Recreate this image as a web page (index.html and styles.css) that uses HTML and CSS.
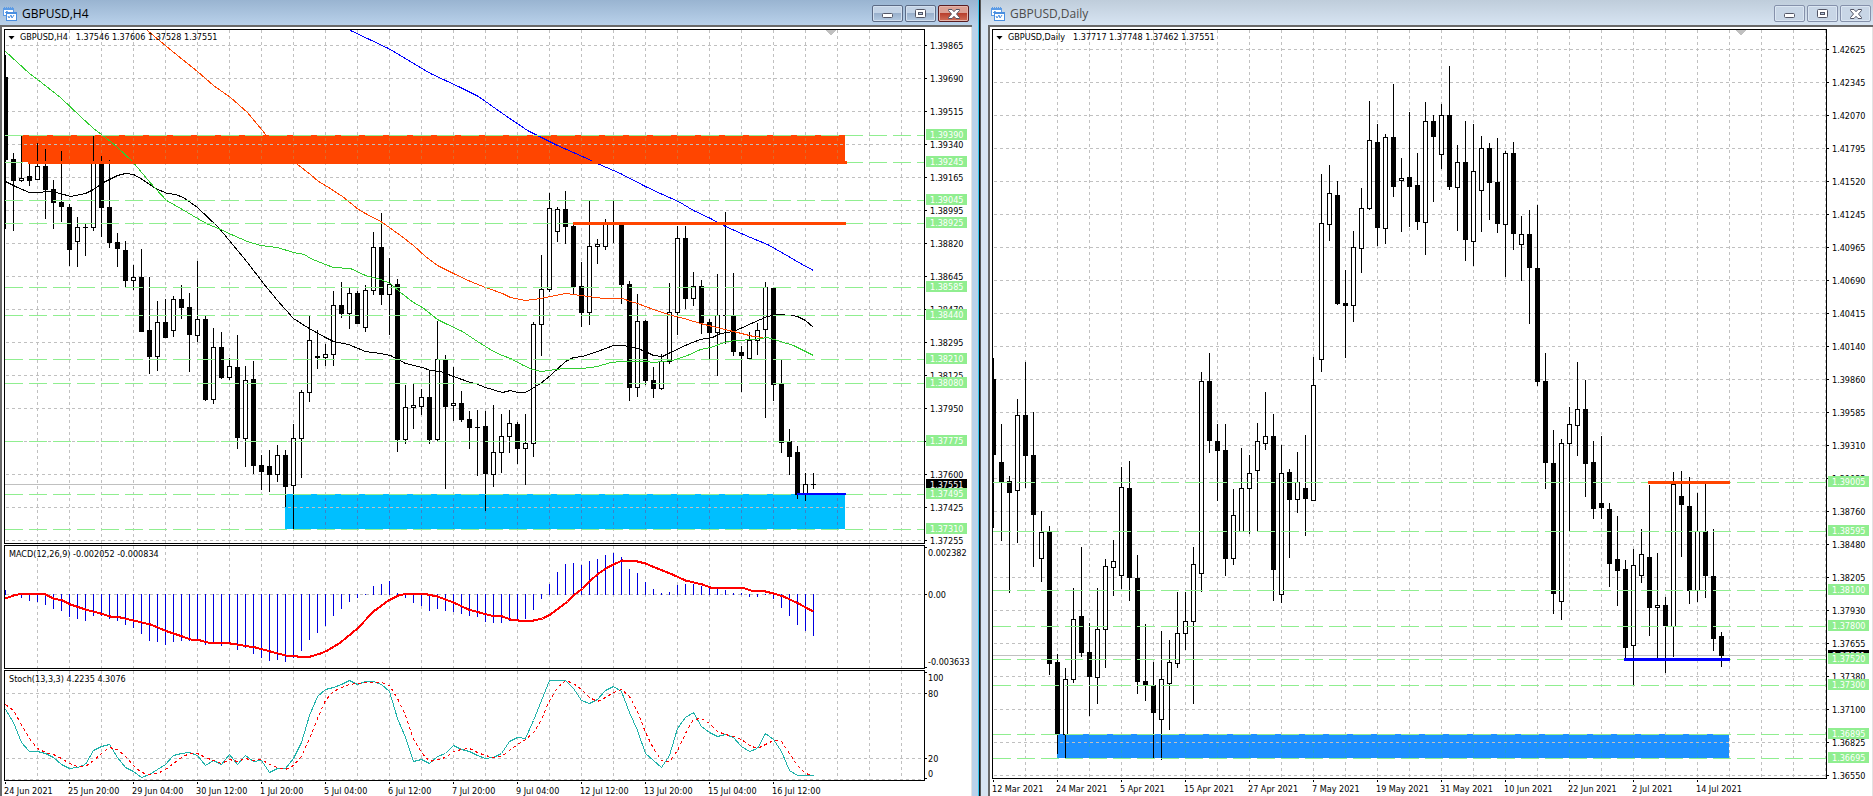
FILE: index.html
```
<!DOCTYPE html>
<html lang="en">
<head>
    <meta charset="utf-8">
    <title>GBPUSD</title>
    <link rel="stylesheet" href="styles.css">
</head>
<body>
    <svg class="defs" width="0" height="0" aria-hidden="true">
        <symbol id="icon-chart" viewBox="0 0 14 14">
            <rect x="0.5" y="1.5" width="10" height="7" fill="#fff" stroke="#5b9be6"/>
            <path d="M1 2.5h9M1.5 0v2M3.5 0v2M5.5 0v2M7.5 0v2M9.5 0v2M2 6l2-2 1 2" fill="none" stroke="#5b9be6"/>
            <rect x="3.5" y="5.5" width="10" height="8" fill="#fff" stroke="#4a8fe0"/>
            <path d="M4 6.5h9M5 9l1 2 2-3 1 3 2-3" fill="none" stroke="#4a8fe0"/>
        </symbol>
        <symbol id="icon-min" viewBox="0 0 11 5">
            <rect x="0.5" y="0.5" width="10" height="4" rx="1" fill="#fff" stroke="#535666"/>
        </symbol>
        <symbol id="icon-max" viewBox="0 0 11 9">
            <rect x="0.5" y="0.5" width="10" height="8" rx="1" fill="#fff" stroke="#535666"/>
            <rect x="3.5" y="3.5" width="4" height="2" fill="#b4c6dc" stroke="#535666"/>
        </symbol>
        <symbol id="icon-close" viewBox="0 0 12 10">
            <path d="M0.5 0.5h3.5l2 2.2 2-2.2h3.5v1l-3 3.5 3 3.5v1h-3.5l-2-2.2-2 2.2h-3.5v-1l3-3.5-3-3.5z" fill="#fff" stroke="#535666"/>
        </symbol>
    </svg>

    <main class="desktop">
        <section class="window active">
            <header class="title-bar">
                <svg class="icon" width="14" height="14"><use href="#icon-chart"/></svg>
                <h2>GBPUSD,H4</h2>
                <button class="win-btn min" aria-label="Minimize"><svg width="11" height="5"><use href="#icon-min"/></svg></button>
                <button class="win-btn" aria-label="Restore"><svg width="11" height="9"><use href="#icon-max"/></svg></button>
                <button class="win-btn close" aria-label="Close"><svg width="12" height="10"><use href="#icon-close"/></svg></button>
            </header>
            <div class="client h4">
                <div class="pane">
                    <svg class="plot" id="h4-price"></svg>
                    <div class="caption"><button class="drop" aria-label="Trade panel"></button><span class="symbol">GBPUSD,H4</span>1.37546 1.37606 1.37528 1.37551</div>
                </div>
                <svg class="axis" id="h4-price-axis"></svg>
                <div class="pane">
                    <svg class="plot" id="h4-macd"></svg>
                    <div class="caption sub">MACD(12,26,9) -0.002052 -0.000834</div>
                </div>
                <svg class="axis" id="h4-macd-axis"></svg>
                <div class="pane">
                    <svg class="plot" id="h4-stoch"></svg>
                    <div class="caption sub">Stoch(13,3,3) 4.2235 4.3076</div>
                </div>
                <svg class="axis" id="h4-stoch-axis"></svg>
                <svg class="dates" id="h4-dates"></svg>
            </div>
        </section>

        <section class="window">
            <header class="title-bar">
                <svg class="icon" width="14" height="14"><use href="#icon-chart"/></svg>
                <h2>GBPUSD,Daily</h2>
                <button class="win-btn min" aria-label="Minimize"><svg width="11" height="5"><use href="#icon-min"/></svg></button>
                <button class="win-btn" aria-label="Restore"><svg width="11" height="9"><use href="#icon-max"/></svg></button>
                <button class="win-btn close" aria-label="Close"><svg width="12" height="10"><use href="#icon-close"/></svg></button>
            </header>
            <div class="client daily">
                <div class="pane">
                    <svg class="plot" id="d1-price"></svg>
                    <div class="caption"><button class="drop" aria-label="Trade panel"></button><span class="symbol">GBPUSD,Daily</span>1.37717 1.37748 1.37462 1.37551</div>
                </div>
                <svg class="axis" id="d1-price-axis"></svg>
                <svg class="dates" id="d1-dates"></svg>
            </div>
        </section>
    </main>
    <script src="chart.js"></script>
</body>
</html>
```
FILE: styles.css
```
* {
    box-sizing: border-box;
}
body {
    margin: 0;
    background: #14141c;
    font-family: "DejaVu Sans Condensed", "DejaVu Sans", sans-serif;
    font-size: 9px;
    color: #000;
}
.defs {
    position: absolute;
}
.desktop {
    display: grid;
    grid-template-columns: 979fr 893fr;
    gap: 1px;
    height: 100vh;
    min-height: 500px;
}

/* windows */
.window {
    display: flex;
    flex-direction: column;
    min-width: 0;
    background: #d7e4f2;
    border-left: 1px solid #555;
}
.window.active {
    background: #b9d1ea;
    border-left: none;
    border-right: 1px solid #35c8ee;
}
.title-bar {
    display: flex;
    align-items: center;
    gap: 2px;
    height: 25px;
    padding: 2px 2px 0 10px;
    background: linear-gradient(#bfcddb, #d7e4f2);
}
.active .title-bar {
    padding: 2px 9px 0 3px;
    background: linear-gradient(#99b4d1, #b9d1ea);
}
.title-bar h2 {
    flex: 1;
    margin: 0 0 0 3px;
    font: 12px "Open Sans", "Noto Sans", sans-serif;
    color: #4c4c4c;
}
.active .title-bar h2 {
    color: #000;
}
.win-btn {
    display: flex;
    align-items: center;
    justify-content: center;
    width: 31px;
    height: 17px;
    padding: 0;
    border: 1px solid #8591ab;
    border-radius: 2px;
    background: #c8d6e6;
    box-shadow: inset 0 0 0 1px #dbe6f2;
}
.win-btn.min {
    padding-top: 4px;
}
.active .win-btn {
    border-color: #5c6b86;
    background: linear-gradient(#c3d3e6 50%, #99b0cc 50%, #b4cae2);
    box-shadow: inset 0 0 0 1px #d3e0ef;
}
.active .win-btn.close {
    border-color: #5a1d22;
    background: linear-gradient(#dba094 50%, #b9402e 50%, #d0705a);
    box-shadow: inset 0 0 0 1px #e6b5ab;
}

/* chart area */
.client {
    flex: 1;
    display: grid;
    grid-template-columns: minmax(0, 1fr) 45px;
    row-gap: 1px;
    min-height: 0;
    padding: 2px 1px 0 2px;
    background: #fff;
    border: solid #696969;
    border-width: 2px 0 0 2px;
    box-shadow: inset -1px 0 #e3e3e3;
}
.client.h4 {
    grid-template-rows: minmax(0, 1fr) 124px 111px 14px;
    margin-right: 6px;
    padding-right: 2px;
}
.client.daily {
    grid-template-rows: minmax(0, 1fr) 16px;
    margin-left: 7px;
}
.pane {
    position: relative;
    min-width: 0;
    border: 1px solid #000;
}
.plot,
.axis,
.dates {
    display: block;
    width: 100%;
    height: 100%;
}
.dates {
    grid-column: 1 / 3;
}
.caption {
    position: absolute;
    top: 0;
    left: 3px;
    display: flex;
    align-items: center;
    line-height: 15px;
}
.caption.sub {
    top: 1px;
    left: 4px;
}
.symbol {
    margin-right: 8px;
}
.drop {
    width: 7px;
    height: 4px;
    margin-right: 5px;
    padding: 0;
    border: none;
    background: #000;
    clip-path: polygon(0 0, 100% 0, 50% 100%);
}

/* chart drawing */
.grid {
    fill: none;
    stroke: #c0c0c0;
    stroke-dasharray: 3 3;
}
.level {
    fill: none;
    stroke: #90ee90;
    stroke-dasharray: 18 6;
}
.line {
    fill: none;
}
.signal {
    fill: none;
    stroke: #f00;
    stroke-dasharray: 3 3;
}
.level-text {
    fill: #fff;
}
```
FILE: chart.js
```
var STEP = 8;

// candles: high, body top, body bottom, low, 1 = bear / 0 = bull
var h4 = `55 77 160 229 1|153 159 181 231 1|136 178 181 182 0|163 176 181 186 1|143 166 180 180 0|149 166 190 219 1
180 189 203 229 1|151 202 207 222 1|204 207 250 266 1|217 227 242 267 0|224 227 228 256 1|136 162 228 231 0
156 163 208 237 1|160 207 243 248 1|233 242 249 267 1|241 250 281 287 1|265 277 281 290 0|249 277 332 332 1
277 330 357 374 1|301 322 357 371 0|299 322 338 338 1|296 299 331 337 0|285 299 308 319 1|293 307 335 372 1
261 319 336 342 0|316 319 400 401 1|328 347 400 404 0|332 347 378 379 1|358 366 378 380 0|335 367 438 449 1
366 380 439 467 0|361 379 466 474 1|455 465 472 490 1|450 466 475 492 1|445 455 475 482 0|450 455 487 507 1
424 438 486 529 0|390 392 439 478 0|316 340 393 402 0|330 356 358 369 1|344 354 358 366 0|291 305 355 366 0
282 305 314 318 1|288 293 314 329 0|291 293 324 324 1|285 290 328 332 0|232 247 291 295 0|213 247 295 305 1
258 284 295 335 0|279 284 440 452 1|385 407 440 444 0|384 405 408 429 0|389 397 407 415 0|370 397 440 444 1
321 359 440 441 0|355 360 407 489 1|367 403 406 421 0|391 403 420 422 1|411 419 428 449 1|410 427 428 476 1
411 426 474 511 1|405 452 475 487 0|414 436 453 473 0|410 423 437 453 0|422 424 449 464 1|414 443 449 485 0
322 324 444 457 0|255 289 325 356 0|193 208 290 292 0|207 209 232 242 0|191 209 227 244 1|225 226 287 294 1
262 286 313 327 1|201 246 313 325 0|239 244 247 264 0|219 224 247 250 0|201 223 224 243 1|224 225 285 304 1
281 284 388 401 1|294 321 388 397 0|320 321 381 385 1|367 380 389 398 1|354 361 389 390 0|283 312 362 364 0
226 238 313 335 0|226 238 299 309 1|272 286 299 306 0|280 286 323 334 1|319 322 333 359 1|274 315 333 376 0
212 315 316 344 1|273 315 352 356 1|346 352 356 392 1|332 340 359 359 0|323 330 341 355 0|282 287 330 418 0
288 288 385 401 1|360 384 443 453 1|429 441 457 475 1|446 452 495 499 1|473 484 494 501 0|473 484 485 489 1`;

var d1 = `358 379 455 528 1|424 462 482 541 1|476 481 493 593 1|399 415 491 543 0|362 415 456 488 1|412 455 515 567 1
511 532 559 582 0|526 531 664 675 1|654 662 734 754 1|668 679 735 758 0|588 619 680 683 0|547 616 653 657 1
623 652 677 716 1|588 629 678 704 0|559 566 630 668 0|540 561 568 596 0|467 487 576 589 0|461 488 578 601 1
555 578 682 694 1|624 681 685 701 1|662 685 713 758 1|631 679 720 760 0|640 662 684 730 0|592 633 664 668 0
592 621 634 650 0|547 564 622 704 0|372 381 574 592 0|353 381 441 453 1|424 441 451 501 1|424 450 559 576 1
489 515 559 565 0|448 488 532 532 0|455 473 489 534 0|423 441 471 531 0|392 436 444 450 0|414 436 570 601 1
445 473 595 603 0|469 472 500 558 1|452 482 500 513 0|435 488 499 536 1|357 385 501 501 0|174 223 360 372 0
165 193 225 241 0|181 195 304 305 1|270 303 306 358 1|231 247 306 322 0|188 208 249 273 0|101 140 209 210 0
124 142 228 246 1|134 137 229 244 0|84 137 187 197 1|158 178 181 232 0|112 177 187 227 1|153 185 222 230 1
102 121 223 255 0|115 121 137 202 1|104 115 155 169 0|66 115 187 190 1|145 162 188 231 0|121 162 240 261 1
124 171 242 266 0|136 148 191 232 0|143 148 183 220 1|138 182 224 233 1|151 153 225 277 0|142 153 234 250 1
216 234 245 281 0|210 234 268 324 1|205 268 382 386 1|353 381 463 489 1|430 463 594 614 1|439 443 602 620 0
407 424 444 531 0|362 409 426 456 0|380 409 464 497 1|441 462 509 519 1|436 503 508 519 1|503 509 564 587 1
516 559 571 606 1|560 569 648 658 1|549 565 646 685 0|529 554 576 583 0|485 557 608 636 1|553 605 608 658 0
597 605 626 673 1|472 484 627 657 0|471 496 505 557 1|477 506 591 604 1|493 531 591 602 0|484 531 576 598 1
529 576 639 651 1|632 636 656 667 1`;

var maBlue = '350,30 388,48 430,73 460,87 478,96 502,113 527,130 557,145 582,156 599,164 620,173 645,186 662,194 678,201 693,210 710,218 725,226 750,237 767,244 783,253 800,263 813,270';
var maRed = '147,30 166,46 182,59 197,71 213,85 230,97 247,112 266,135 297,164 310,174 318,181 325,185 342,196 358,209 365,213 382,222 400,235 413,245 425,256 437,265 453,273 470,281 485,287 502,293 510,297 525,300 540,298 550,296 565,293 573,294 588,296 603,298 622,298 630,301 637,303 653,309 668,314 687,319 700,323 712,326 733,331 753,336 763,337';
var maBlack = '5,181 17,187 29,192 38,192 48,191 60,193 70,196 85,193 93,189 103,182 117,175 125,173 133,174 142,179 155,188 167,193 175,194 183,197 197,207 218,227 233,245 247,262 263,283 277,300 293,318 307,327 325,337 333,341 348,344 365,351 380,353 390,355 405,363 422,367 430,370 440,371 453,376 470,382 475,383 485,387 502,392 510,390 517,392 525,392 540,383 550,375 565,361 573,357 582,356 597,351 613,345 623,345 637,348 645,351 653,355 662,356 668,353 687,344 700,339 712,337 720,333 733,331 740,328 753,322 767,316 777,314 792,315 797,316 805,320 813,327';
var maGreen = '5,51 17,62 29,73 37,79 60,97 80,116 93,128 101,134 110,141 117,147 132,161 147,179 155,188 166,200 182,209 197,218 208,224 218,228 233,235 247,241 260,245 277,247 293,252 304,254 310,258 325,264 333,267 350,268 365,275 380,279 390,283 400,292 413,302 422,307 437,319 445,323 462,331 477,341 493,351 502,355 510,358 523,365 532,369 541,371 555,369 565,368 582,368 597,366 610,362 622,361 645,361 653,362 662,361 672,360 687,355 700,349 710,347 727,341 737,340 753,339 767,337 780,341 793,345 803,350 813,355';

var macd = [590,594,598,601,602,605,609,611,617,619,621,616,616,619,621,625,628,634,641,642,645,642,641,641,639,645,643,646,644,650,648,654,658,661,660,662,658,651,640,633,626,616,609,602,598,595,586,584,581,593,598,603,606,611,609,611,612,614,616,617,622,623,623,621,620,619,610,599,584,572,564,563,565,561,559,555,553,557,569,573,582,589,593,592,585,584,584,586,587,589,590,593,593,597,597,595,599,608,616,625,631,636];
var macdSignal = '5,598 13,595 22,593 30,593 45,594 53,598 62,600 70,604 85,609 100,613 110,616 120,617 133,620 150,624 167,631 182,636 190,639 200,640 207,642 230,643 255,647 270,651 285,655 297,656 310,656 320,653 327,650 340,642 357,628 373,611 388,600 398,595 407,593 422,593 437,596 453,602 468,609 490,615 502,616 510,619 518,620 533,620 542,618 550,614 558,608 567,601 573,595 582,588 590,580 598,573 607,567 615,563 622,560 637,561 645,563 657,568 672,574 685,580 702,584 710,587 742,587 750,590 765,591 773,593 783,596 798,603 807,608 813,611';
var stoch = [709,722,742,751,751,753,757,764,768,767,764,750,746,744,757,767,771,777,774,769,764,755,753,752,755,765,760,764,754,764,755,761,760,772,768,768,758,742,715,696,689,687,684,680,684,681,681,684,691,718,737,761,759,763,756,753,745,749,751,755,758,757,753,741,737,738,720,700,680,680,680,688,700,703,699,690,686,691,712,730,753,760,767,755,728,717,712,726,732,736,734,737,746,751,748,733,739,751,770,775,775,775];

function rect(x, y, w, h, fill) {
    return '<rect x="' + x + '" y="' + y + '" width="' + w + '" height="' + h + '" fill="' + fill + '"/>';
}
function hline(x, y, cls) {
    return '<path class="' + cls + '" d="M' + x + ' ' + (y + 0.5) + 'h3000"/>';
}
function poly(points, color, width) {
    return '<polyline class="line" points="' + points + '" stroke="' + color + '" stroke-width="' + width + '" transform="translate(0.5 0.5)"/>';
}
// vertical grid, from y1 to y2, dashes counted from the pane top
function vgrid(x, y1, y2, top, color) {
    var s = '';
    for (; x < 3000; x += 32) {
        s += '<path class="grid" d="M' + (x + 0.5) + ' ' + y1 + 'V' + y2 + '" stroke-dashoffset="' + (y1 - top) % 6 + '"' + (color ? ' style="stroke:' + color + '"' : '') + '/>';
    }
    return s;
}
function put(id, x, y, content) {
    document.getElementById(id).innerHTML =
        '<g shape-rendering="crispEdges" transform="translate(' + -x + ' ' + -y + ')">' + content + '</g>';
}
function candles(data, x0) {
    return data.split(/[|\n]/).map(function (row, i) {
        var c = row.split(' ').map(Number), x = x0 + i * STEP;
        var s = rect(x, c[0], 1, c[3] - c[0], '#000') + rect(x - 2, c[1], 5, c[2] - c[1], '#000');
        if (!c[4]) s += rect(x - 1, c[1] + 1, 3, c[2] - c[1] - 2, '#fff');
        return s;
    }).join('');
}
function axis(id, x, top, first, labels, levels, price) {
    var s = '';
    labels.forEach(function (t, i) {
        var y = first + i * 33;
        s += rect(x, y, 2, 1, '#000') + '<text x="' + (x + 5) + '" y="' + (y + 4) + '">' + t + '</text>';
    });
    s += rect(x + 1, price - 5, 41, 10, '#000') + '<text class="level-text" x="' + (x + 5) + '" y="' + (price + 4) + '">1.37551</text>';
    levels.forEach(function (l) {
        s += rect(x + 1, l[0] - 6, 41, 11, '#90ee90') + '<text class="level-text" x="' + (x + 5) + '" y="' + (l[0] + 3) + '">' + l[1] + '</text>';
    });
    put(id, x, top, s);
}
function dates(id, x0, top, labels) {
    put(id, x0 - 1, top, labels.map(function (t, i) {
        var x = x0 + i * 64;
        return rect(x, top, 1, 2, '#000') + '<text x="' + (x - 1) + '" y="' + (top + 12) + '">' + t + '</text>';
    }).join(''));
}

/* GBPUSD,H4 */
var h4Levels = [[135, '1.39390'], [162, '1.39245'], [200, '1.39045'], [223, '1.38925'], [287, '1.38585'], [315, '1.38440'],
    [359, '1.38210'], [383, '1.38080'], [441, '1.37775'], [494, '1.37495'], [529, '1.37310']];
var s = vgrid(37, 30, 543, 30), y;
s += rect(22, 135, 823, 27, '#ff4500') + rect(285, 494, 560, 35, '#00bfff');
s += '<svg x="22" y="135" width="823" height="27" viewBox="22 135 823 27">' + vgrid(37, 135, 162, 30, '#dd6a2a') + '</svg>';
s += '<svg x="285" y="494" width="560" height="35" viewBox="285 494 560 35">' + vgrid(293, 494, 529, 30, '#3c82c8') + '</svg>';
for (y = 45; y < 543; y += 33) s += hline(6, y, 'grid');
s += rect(5, 484, 3000, 1, '#c0c0c0');
s += candles(h4, 5);
s += poly(maBlack, '#000', 1) + poly(maRed, '#ff4500', 1) + poly(maBlue, '#00f', 1) + poly(maGreen, '#32cd32', 1);
h4Levels.forEach(function (l) { s += hline(5, l[0], 'level'); });
s += rect(28, 161, 819, 3, '#ff4500') + rect(573, 222, 273, 3, '#ff4500') + rect(797, 493, 49, 2, '#00f');
s += '<path d="M825 30h11l-5 5h-1z" fill="#c0c0c0"/>';
put('h4-price', 5, 30, s);
axis('h4-price-axis', 925, 29, 45, ['1.39865', '1.39690', '1.39515', '1.39340', '1.39165', '1.38995', '1.38820', '1.38645',
    '1.38470', '1.38295', '1.38125', '1.37950', '1.37775', '1.37600', '1.37425', '1.37255'], h4Levels, 484);

s = vgrid(37, 546, 668, 546) + hline(6, 594, 'grid');
macd.forEach(function (v, i) {
    s += rect(5 + i * STEP, Math.min(v, 594), 1, Math.abs(v - 594) + (v < 594 ? 1 : 0), '#0000e0');
});
s += poly(macdSignal, '#f00', 2);
put('h4-macd', 5, 546, s);
put('h4-macd-axis', 925, 545, rect(925, 547, 2, 1, '#000') + rect(925, 594, 2, 1, '#000') + rect(925, 667, 2, 1, '#000') +
    '<text x="928" y="556">0.002382</text><text x="928" y="598">0.00</text><text x="928" y="665">-0.003633</text>');

s = vgrid(37, 671, 780, 671) + hline(6, 693, 'grid') + hline(6, 758, 'grid') + hline(6, 779, 'grid');
var main = [], signal = [];
stoch.forEach(function (v, i) {
    var a = i > 0 ? stoch[i - 1] : 702, b = i > 1 ? stoch[i - 2] : 700;
    main.push((5 + i * STEP) + ',' + v);
    signal.push((5 + i * STEP) + ',' + Math.round((v + a + b) / 3));
});
s += poly(main.join(' '), '#20b2aa', 1);
s += '<polyline class="signal" points="' + signal.join(' ') + '" transform="translate(0.5 0.5)"/>';
put('h4-stoch', 5, 671, s);
put('h4-stoch-axis', 925, 670, rect(925, 672, 2, 1, '#000') + rect(925, 693, 2, 1, '#000') + rect(925, 758, 2, 1, '#000') + rect(925, 778, 2, 1, '#000') +
    '<text x="928" y="681">100</text><text x="928" y="697">80</text><text x="928" y="762">20</text><text x="928" y="777">0</text>');
dates('h4-dates', 5, 781, ['24 Jun 2021', '25 Jun 20:00', '29 Jun 04:00', '30 Jun 12:00', '1 Jul 20:00', '5 Jul 04:00', '6 Jul 12:00',
    '7 Jul 20:00', '9 Jul 04:00', '12 Jul 12:00', '13 Jul 20:00', '15 Jul 04:00', '16 Jul 12:00']);

/* GBPUSD,Daily */
var d1Levels = [[482, '1.39005'], [531, '1.38595'], [590, '1.38100'], [626, '1.37800'], [659, '1.37520'], [685, '1.37300'],
    [734, '1.36895'], [758, '1.36695']];
s = vgrid(1025, 30, 778, 30) + rect(1057, 734, 672, 24, '#1e90ff');
s += '<svg x="1057" y="734" width="672" height="24" viewBox="1057 734 672 24">' + vgrid(1057, 734, 758, 30, '#1fa0d4') + '</svg>';
for (y = 49; y < 778; y += 33) s += hline(994, y, 'grid');
s += rect(993, 655, 3000, 1, '#c0c0c0');
s += candles(d1, 993);
d1Levels.forEach(function (l) { s += hline(993, l[0], 'level'); });
s += rect(1648, 481, 82, 3, '#ff4500') + rect(1624, 658, 106, 3, '#00f');
s += '<path d="M1735 30h11l-5 5h-1z" fill="#c0c0c0"/>';
put('d1-price', 993, 30, s);
axis('d1-price-axis', 1826, 29, 49, ['1.42625', '1.42345', '1.42070', '1.41795', '1.41520', '1.41245', '1.40965', '1.40690', '1.40415',
    '1.40140', '1.39860', '1.39585', '1.39310', '1.39035', '1.38760', '1.38480', '1.38205', '1.37930', '1.37655', '1.37380',
    '1.37100', '1.36825', '1.36550'], d1Levels, 655);
dates('d1-dates', 993, 779, ['12 Mar 2021', '24 Mar 2021', '5 Apr 2021', '15 Apr 2021', '27 Apr 2021', '7 May 2021', '19 May 2021',
    '31 May 2021', '10 Jun 2021', '22 Jun 2021', '2 Jul 2021', '14 Jul 2021']);
```
